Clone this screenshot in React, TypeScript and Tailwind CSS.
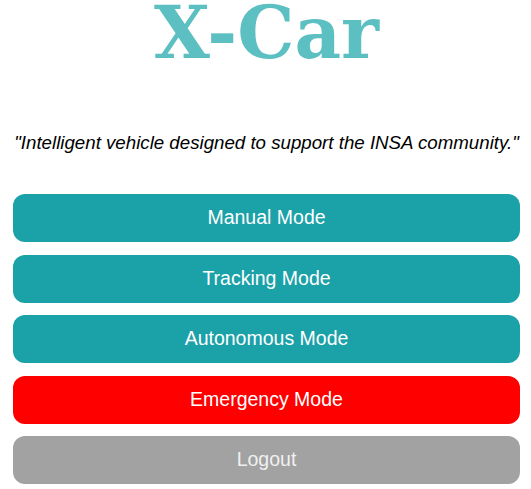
import React from 'react';

const BUTTONS = [
  { label: 'Manual Mode', cls: 'bg-[#1ba1a8] text-white' },
  { label: 'Tracking Mode', cls: 'bg-[#1ba1a8] text-white' },
  { label: 'Autonomous Mode', cls: 'bg-[#1ba1a8] text-white' },
  { label: 'Emergency Mode', cls: 'bg-[#ff0000] text-white' },
  { label: 'Logout', cls: 'bg-[#a2a2a2] text-[#f0f0f0]' },
];

export default function App() {
  return (
    <div className="min-h-screen bg-white pl-[13px] pr-[11px] font-['Liberation_Sans',Arial,sans-serif]">
      <h1 className="m-0 text-center font-['DejaVu_Serif',serif] text-[72px] font-bold leading-[66px] text-[#5cbfc1]">
        X-Car
      </h1>
      <p className="mt-[66px] text-center text-[18.7px] leading-[22px] italic text-black whitespace-nowrap">
        "Intelligent vehicle designed to support the INSA community."
      </p>
      <div className="mt-[40px] flex flex-col gap-[12.5px]">
        {BUTTONS.map((b) => (
          <button
            key={b.label}
            className={`h-[48px] w-full rounded-[12px] text-[19.5px] ${b.cls}`}
          >
            {b.label}
          </button>
        ))}
      </div>
    </div>
  );
}
